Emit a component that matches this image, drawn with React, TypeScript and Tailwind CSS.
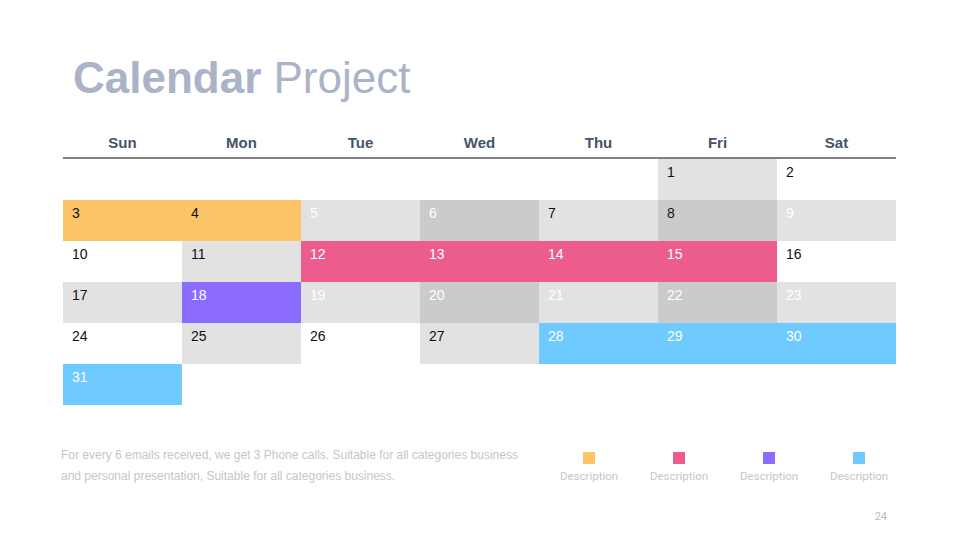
import React from "react";

type Cell = { n?: number; bg: string; fg: string };

const L = "bg-[#e2e2e2]";
const D = "bg-[#cbcbcb]";
const W = "bg-white";
const O = "bg-[#fec468]";
const P = "bg-[#ec5c8e]";
const U = "bg-[#8c6bff]";
const B = "bg-[#6fcbff]";
const K = "text-[#111111]";
const T = "text-white";

const cells: Cell[] = [
  { bg: W, fg: K }, { bg: W, fg: K }, { bg: W, fg: K }, { bg: W, fg: K }, { bg: W, fg: K },
  { n: 1, bg: L, fg: K }, { n: 2, bg: W, fg: K },
  { n: 3, bg: O, fg: K }, { n: 4, bg: O, fg: K }, { n: 5, bg: L, fg: T }, { n: 6, bg: D, fg: T },
  { n: 7, bg: L, fg: K }, { n: 8, bg: D, fg: K }, { n: 9, bg: L, fg: T },
  { n: 10, bg: W, fg: K }, { n: 11, bg: L, fg: K }, { n: 12, bg: P, fg: T }, { n: 13, bg: P, fg: T },
  { n: 14, bg: P, fg: T }, { n: 15, bg: P, fg: T }, { n: 16, bg: W, fg: K },
  { n: 17, bg: L, fg: K }, { n: 18, bg: U, fg: T }, { n: 19, bg: L, fg: T }, { n: 20, bg: D, fg: T },
  { n: 21, bg: L, fg: T }, { n: 22, bg: D, fg: T }, { n: 23, bg: L, fg: T },
  { n: 24, bg: W, fg: K }, { n: 25, bg: L, fg: K }, { n: 26, bg: W, fg: K }, { n: 27, bg: L, fg: K },
  { n: 28, bg: B, fg: T }, { n: 29, bg: B, fg: T }, { n: 30, bg: B, fg: T },
  { n: 31, bg: B, fg: T }, { bg: W, fg: K }, { bg: W, fg: K }, { bg: W, fg: K }, { bg: W, fg: K },
  { bg: W, fg: K }, { bg: W, fg: K },
];

const days = ["Sun", "Mon", "Tue", "Wed", "Thu", "Fri", "Sat"];
const legend = ["bg-[#fec468]", "bg-[#ec5c8e]", "bg-[#8c6bff]", "bg-[#6fcbff]"];

export default function App() {
  return (
    <div className="w-[960px] h-[540px] bg-white overflow-hidden flex flex-col font-['Liberation_Sans',Arial,sans-serif]">
      <h1 className="mt-[56px] ml-[73px] text-[44px] leading-[44px] text-[#aab3c7] whitespace-nowrap">
        <span className="font-bold">Calendar</span> Project
      </h1>

      <div className="ml-[63px] w-[833px] mt-[26px]">
        <div className="grid grid-cols-7 h-[33px] border-b-2 border-[#808080]">
          {days.map((d) => (
            <div key={d} className="flex items-start justify-center pt-[8px] text-[15px] leading-[17px] font-bold text-[#44546a]">
              {d}
            </div>
          ))}
        </div>
        <div className="grid grid-cols-7 auto-rows-[41px]">
          {cells.map((c, i) => (
            <div key={i} className={`${c.bg} ${c.fg} pl-[9px] pt-[5px] text-[14px] leading-[16px]`}>
              {c.n ?? ""}
            </div>
          ))}
        </div>
      </div>

      <div className="flex mt-[40px] ml-[61px]">
        <div className="w-[483px] text-[12px] leading-[21px] text-[#c3c6cd] whitespace-nowrap">
          <p>For every 6 emails received, we get 3 Phone calls. Suitable for all categories business</p>
          <p>and personal presentation, Suitable for all categories business.</p>
        </div>
        <div className="flex pt-[7px]">
          {legend.map((c, i) => (
            <div key={i} className="w-[90px] flex flex-col items-center">
              <div className={`w-[12px] h-[12px] ${c}`} />
              <div className="mt-[5px] text-[11.5px] leading-[14px] text-[#c3c6cd] font-['Roboto',sans-serif]">Description</div>
            </div>
          ))}
        </div>
      </div>

      <div className="flex justify-end pr-[73px] mt-[23px]">
        <span className="text-[11px] leading-[13px] text-[#b8bcc4] font-['Roboto',sans-serif]">24</span>
      </div>
    </div>
  );
}
